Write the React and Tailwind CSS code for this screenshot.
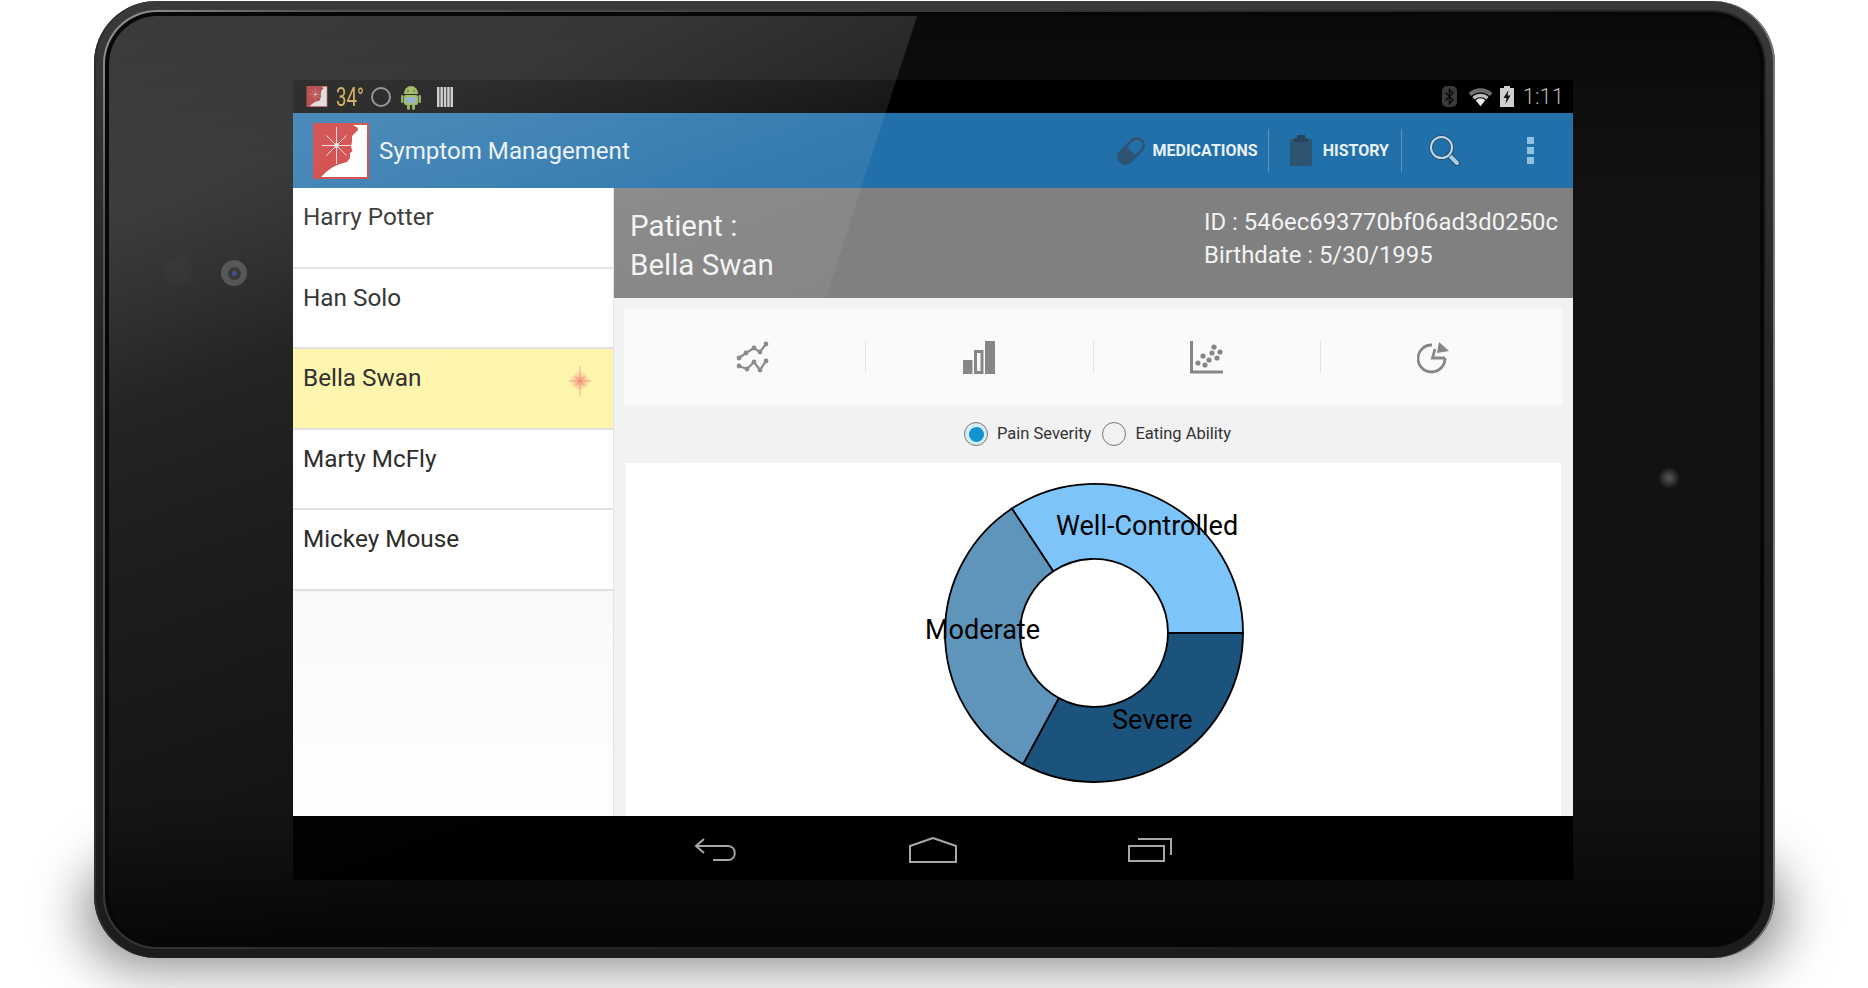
import React from "react";

const patients = ["Harry Potter", "Han Solo", "Bella Swan", "Marty McFly", "Mickey Mouse"];

const LogoIcon = ({ className, face = "#ffffff", red = "#cc3333" }) => (
  <svg viewBox="0 0 56 56" className={className}>
    <rect width="56" height="56" fill={red} />
    <path
      d="M40 2 L45 5 L45 7 L42 10 L39 13 L39 18 L38 24 L39.5 28 L37 30 L37 35 L34 39 L27 41 L20 44 L13 49 L8 54 L54 54 L54 2 Z"
      fill={face}
    />
    <g stroke={face} strokeWidth="0.8">
      <path d="M23.5 4 V41 M9 22.5 H38 M13.5 12.5 L33.5 32.5 M33.5 12.5 L13.5 32.5" />
    </g>
    <circle cx="23.5" cy="22.5" r="2.2" fill={face} />
  </svg>
);

const AndroidIcon = () => (
  <svg viewBox="0 0 20 26" className="w-5 h-[26px] ml-[10px]">
    <path d="M3 10 a7 8 0 0 1 14 0 Z" fill="#8db04a" />
    <rect x="3" y="11" width="14" height="10" rx="2" fill="#8db04a" />
    <rect x="0" y="11" width="2.5" height="8" rx="1.2" fill="#7ea03f" />
    <rect x="17.5" y="11" width="2.5" height="8" rx="1.2" fill="#7ea03f" />
    <rect x="6" y="20" width="3" height="6" rx="1.4" fill="#7ea03f" />
    <rect x="11" y="20" width="3" height="6" rx="1.4" fill="#7ea03f" />
    <path d="M4 13 L8 14 H12 L16 13 V15 L13 16.5 L16 19 H12 L10 17.5 L8 19 H4 L7 16.5 L4 15 Z" fill="#7f9fdc" />
    <circle cx="7" cy="7" r="0.9" fill="#40521c" />
    <circle cx="13" cy="7" r="0.9" fill="#40521c" />
  </svg>
);

const BarcodeIcon = () => (
  <svg viewBox="0 0 16 20" className="w-4 h-5 ml-4">
    <path d="M0 0 H2.5 V20 H0 Z M3.4 0 H5.9 V20 H3.4 Z M6.8 0 H9.3 V20 H6.8 Z M10.2 0 H12.7 V20 H10.2 Z M13.5 0 H16 V20 H13.5 Z" fill="#c4c4c4" />
  </svg>
);

const BluetoothIcon = () => (
  <svg viewBox="0 0 15 21" className="w-[15px] h-[21px]">
    <rect width="15" height="21" rx="5" fill="#3a3a3a" />
    <path d="M3.5 6.5 L11 14 L7.5 17.5 V3.5 L11 7 L3.5 14.5" fill="none" stroke="#0b0b0b" strokeWidth="1.5" />
  </svg>
);

const WifiIcon = () => (
  <svg viewBox="0 0 26 20" className="w-[25px] h-5 ml-[11px]">
    <path d="M0.5 6 A18 18 0 0 1 25.5 6 L22.5 9 A14 14 0 0 0 3.5 9 Z" fill="#6d6d6d" />
    <path d="M4.5 10 A12.5 12.5 0 0 1 21.5 10 L19 12.5 A9 9 0 0 0 7 12.5 Z" fill="#bcbcbc" />
    <path d="M8 13.5 A7 7 0 0 1 18 13.5 L13 19.5 Z" fill="#ececec" />
  </svg>
);

const BatteryIcon = () => (
  <svg viewBox="0 0 14 21" className="w-[14px] h-[21px] ml-[7px]">
    <path d="M4 0 H10 V2 H14 V21 H0 V2 H4 Z" fill="#cfcfcf" />
    <path d="M8.5 4 L3.5 12 H6.5 L5.5 18 L10.5 9.5 H7.5 Z" fill="#111111" />
  </svg>
);

const PillIcon = () => (
  <svg viewBox="0 0 28 28" className="w-7 h-7">
    <g transform="rotate(-45 14 14)">
      <rect x="-1" y="7" width="30" height="14" rx="7" fill="none" stroke="#2f5372" strokeWidth="2.6" />
      <path d="M14 7 H6 a7 7 0 0 0 0 14 H14 Z" fill="#2f5372" />
    </g>
  </svg>
);

const ClipboardIcon = () => (
  <svg viewBox="0 0 22 31" className="w-[22px] h-[31px]">
    <rect y="4" width="22" height="27" rx="1" fill="#2f5372" />
    <path d="M7 0 H15 V3 H18 V7 H4 V3 H7 Z" fill="#24445f" />
  </svg>
);

const SearchIcon = () => (
  <svg viewBox="0 0 31 31" className="w-[31px] h-[31px]">
    <path d="M20 20 L28 28" stroke="#2a4f6e" strokeWidth="6.5" strokeLinecap="round" />
    <path d="M20 20 L28 28" stroke="#a9cde6" strokeWidth="4" strokeLinecap="round" />
    <circle cx="12.5" cy="12.5" r="10.5" fill="none" stroke="#2a4f6e" strokeWidth="4" />
    <circle cx="12.5" cy="12.5" r="10.5" fill="none" stroke="#bcd8ea" strokeWidth="2" />
  </svg>
);

const LineChartIcon = () => (
  <svg viewBox="0 0 33 32" className="w-[33px] h-8">
    <g fill="none" stroke="#868686" strokeWidth="2.2">
      <path d="M3 17 L10 12 L18 7 L24 11 L30 3" />
      <path d="M3 25 L11 28 L18 21 L24 29 L30 20" />
    </g>
    <g fill="#868686">
      <circle cx="3" cy="17" r="2.4" />
      <circle cx="10" cy="12" r="2.4" />
      <circle cx="18" cy="7" r="2.4" />
      <circle cx="24" cy="11" r="2.4" />
      <circle cx="30" cy="3" r="2.4" />
      <circle cx="3" cy="25" r="2.4" />
      <circle cx="11" cy="28" r="2.4" />
      <circle cx="18" cy="21" r="2.4" />
      <circle cx="24" cy="29" r="2.4" />
      <circle cx="30" cy="20" r="2.4" />
    </g>
  </svg>
);

const BarChartIcon = () => (
  <svg viewBox="0 0 32 33" className="w-8 h-[33px]">
    <rect x="0" y="19" width="9.5" height="14" fill="#868686" />
    <rect x="12.5" y="10.5" width="6.5" height="21" fill="none" stroke="#868686" strokeWidth="3" />
    <rect x="22" y="0" width="10" height="33" fill="#868686" />
  </svg>
);

const ScatterIcon = () => (
  <svg viewBox="0 0 33 33" className="w-[33px] h-[33px]">
    <path d="M1.5 0 V31 H33" fill="none" stroke="#868686" strokeWidth="3" />
    <g fill="#868686">
      <circle cx="8" cy="22" r="2.6" />
      <circle cx="15" cy="24" r="2.6" />
      <circle cx="13" cy="15" r="2.6" />
      <circle cx="19" cy="19" r="2.6" />
      <circle cx="22" cy="12" r="2.6" />
      <circle cx="24" cy="6" r="2.6" />
      <circle cx="27" cy="17" r="2.6" />
      <circle cx="30" cy="11" r="2.6" />
    </g>
  </svg>
);

const PieIcon = () => (
  <svg viewBox="0 0 33 33" className="w-[33px] h-[33px]">
    <path d="M28 17 A13.5 13.5 0 1 1 15 4 M18 8 L15.5 17 H28" fill="none" stroke="#868686" strokeWidth="2.8" />
    <path d="M22 1 L32 10 L20 12 Z" fill="#868686" />
  </svg>
);

const SparkIcon = () => (
  <svg viewBox="0 0 26 32" className="w-[24px] h-8">
    <defs>
      <radialGradient id="spark">
        <stop offset="0%" stopColor="#f05a5a" stopOpacity="0.6" />
        <stop offset="100%" stopColor="#f05a5a" stopOpacity="0" />
      </radialGradient>
    </defs>
    <circle cx="13" cy="16" r="11" fill="url(#spark)" />
    <path d="M13 0 V32 M1 16 H25 M8 11 L18 21 M18 11 L8 21" stroke="#ee7a7a" strokeWidth="0.7" />
  </svg>
);

const Donut = () => (
  <svg viewBox="0 0 400 353" className="w-[400px] h-[353px] overflow-visible">
    <g stroke="#000000" strokeWidth="1.8">
      <path d="M349 170 A149 149 0 0 0 117.9 45.6 L159.2 108.2 A74 74 0 0 1 274 170 Z" fill="#7dc4fb" />
      <path d="M117.9 45.6 A149 149 0 0 0 129.2 301.1 L164.9 235.1 A74 74 0 0 1 159.2 108.2 Z" fill="#5f94bb" />
      <path d="M129.2 301.1 A149 149 0 0 0 349 170 L274 170 A74 74 0 0 1 164.9 235.1 Z" fill="#1b537d" />
    </g>
    <g fill="#000000" fontSize="27" fontFamily="Roboto, sans-serif">
      <text x="162" y="72">Well-Controlled</text>
      <text x="31" y="176">Moderate</text>
      <text x="218" y="266">Severe</text>
    </g>
  </svg>
);

const ChartTab = ({ children, last }) => (
  <div className={`flex-1 h-8 flex items-center justify-center ${last ? "" : "border-r border-[#e4e4e4]"}`}>
    {children}
  </div>
);

const App = () => {
  return (
    <div className="w-[1868px] h-[988px] bg-white overflow-hidden pt-px pl-[94px] font-['Roboto',sans-serif]">
      <div className="relative w-[1681px] h-[957px]">
        {/* soft shadow under the tablet */}
        <div className="absolute -left-[10px] -right-[10px] -bottom-[10px] h-[110px] bg-black/45 blur-[26px] rounded-[60px]"></div>

        {/* rim */}
        <div className="relative h-full rounded-[62px] p-[9px] bg-[linear-gradient(180deg,#3a3a3a,#222222_40%,#1c1c1c)] shadow-[inset_-2px_0_0_#777777,inset_2px_0_0_#2e2e2e]">
          <div className="h-full rounded-[54px] p-[2px] bg-[linear-gradient(135deg,#9a9a9a,#555555_8%,#262626_50%,#1a1a1a)]">
            <div className="h-full rounded-[52px] p-1 bg-[#070707]">
              <div className="relative h-full rounded-[48px] overflow-hidden pt-[64px] pl-[184px] bg-[linear-gradient(180deg,#0a0a0a,#121212_20%,#111111_85%,#060606)]">
                {/* front camera and sensors */}
                <div className="absolute left-[55px] top-[241px] w-7 h-7 rounded-full bg-[#161616]"></div>
                <div className="absolute left-[112px] top-[244px] w-[26px] h-[26px] rounded-full bg-[#3e3e3e] flex items-center justify-center">
                  <div className="w-[13px] h-[13px] rounded-full bg-[#1c1c1c] flex items-center justify-center">
                    <div className="w-[5px] h-[5px] rounded-full bg-[#2b3680]"></div>
                  </div>
                </div>
                <div className="absolute left-[1548px] top-[450px] w-6 h-6 rounded-full bg-[radial-gradient(circle,#4e4e4e,#4e4e4e_10%,transparent_65%)]"></div>

                {/* screen */}
                <div className="w-[1280px] h-[800px] flex flex-col bg-black">
                  <div className="h-[33px] bg-black flex items-center pl-[13px] pr-[9px]">
                    <LogoIcon className="w-[22px] h-[21px]" face="#d8d8d8" red="#a92b2b" />
                    <span className="ml-2 w-[26px] text-[26px] leading-none text-[#cf9f45] origin-left scale-x-[0.72] whitespace-nowrap">34°</span>
                    <div className="ml-[9px] w-5 h-5 rounded-full border-2 border-[#808080]"></div>
                    <AndroidIcon />
                    <BarcodeIcon />
                    <div className="ml-auto flex items-center">
                      <BluetoothIcon />
                      <WifiIcon />
                      <BatteryIcon />
                      <span className="ml-[9px] text-[22px] leading-none font-light text-[#b4b4b4]">1:11</span>
                    </div>
                  </div>

                  <div className="h-[75px] bg-[#2270a9] flex items-center pl-5">
                    <LogoIcon className="w-14 h-14" />
                    <span className="ml-[10px] mt-[2px] text-[24.1px] text-[#e8f1f8]">Symptom Management</span>
                    <div className="ml-auto flex items-center h-[43px]">
                      <PillIcon />
                      <span className="ml-2 text-[16px] font-bold text-[#e8f1f8]">MEDICATIONS</span>
                      <div className="ml-[10px] w-px h-full bg-white/25"></div>
                      <div className="ml-[21px]"><ClipboardIcon /></div>
                      <span className="ml-[11px] text-[16px] font-bold text-[#e8f1f8]">HISTORY</span>
                      <div className="ml-[12px] w-px h-full bg-white/25"></div>
                      <div className="ml-[27px]"><SearchIcon /></div>
                      <div className="ml-[67px] mr-[39px] flex flex-col gap-[3px]">
                        <div className="w-[7px] h-[7px] bg-[#8fc0df]"></div>
                        <div className="w-[7px] h-[7px] bg-[#8fc0df]"></div>
                        <div className="w-[7px] h-[7px] bg-[#8fc0df]"></div>
                      </div>
                    </div>
                  </div>

                  <div className="flex-1 flex min-h-0 bg-white">
                    {/* patient list */}
                    <div className="w-[321px] border-r border-[#e2e2e2] bg-[linear-gradient(180deg,#f8f8f8,#f8f8f8_58%,#ffffff)]">
                      {patients.map((name) => (
                        <div
                          key={name}
                          className={`h-[80.5px] border-b-2 border-[#e0e0e0] pl-[10px] pt-[13px] pr-[21px] flex justify-between text-[24.3px] leading-[32px] text-[#222222] ${
                            name === "Bella Swan" ? "bg-[#fef5a8]" : "bg-white"
                          }`}
                        >
                          <span>{name}</span>
                          {name === "Bella Swan" && <div className="pt-[3px]"><SparkIcon /></div>}
                        </div>
                      ))}
                    </div>

                    {/* patient detail */}
                    <div className="flex-1 flex flex-col bg-[#f2f2f2]">
                      <div className="h-[110px] bg-[#808080] flex justify-between text-[#f2f2f2] pl-[16px] pr-[15px] pt-[16px]">
                        <div className="mt-[3px] text-[29.5px] leading-[39px]">
                          <div>Patient :</div>
                          <div>Bella Swan</div>
                        </div>
                        <div className="mt-[2px] text-[23.9px] leading-[33px]">
                          <div>ID : 546ec693770bf06ad3d0250c</div>
                          <div>Birthdate : 5/30/1995</div>
                        </div>
                      </div>

                      <div className="mt-[11px] ml-[10px] mr-[11px] h-[96px] bg-[#fafafa] flex items-center px-[15px]">
                        <ChartTab><LineChartIcon /></ChartTab>
                        <ChartTab><BarChartIcon /></ChartTab>
                        <ChartTab><ScatterIcon /></ChartTab>
                        <ChartTab last><PieIcon /></ChartTab>
                      </div>

                      <div className="h-[58px] flex items-center justify-center pl-[8px] text-[16.5px] text-[#333333]">
                        <div className="w-6 h-6 rounded-full border border-[#777777] bg-[#d8ecf6] flex items-center justify-center">
                          <div className="w-[15px] h-[15px] rounded-full bg-[#0f93d2]"></div>
                        </div>
                        <span className="ml-[9px]">Pain Severity</span>
                        <div className="ml-[11px] w-6 h-6 rounded-full border border-[#777777]"></div>
                        <span className="ml-[9px]">Eating Ability</span>
                      </div>

                      <div className="flex-1 min-h-0 ml-[12px] mr-3 bg-white flex justify-center">
                        <Donut />
                      </div>
                    </div>
                  </div>

                  <div className="h-[64px] bg-black flex items-center justify-center gap-[171px] pt-[3px]">
                    <svg viewBox="0 0 44 24" className="w-11 h-6 text-[#a8a8a8]">
                      <path d="M10 1 L2 8 L10 15 M2 8 H34 C43 8 43 22 34 22 H19" fill="none" stroke="currentColor" strokeWidth="2" />
                    </svg>
                    <svg viewBox="0 0 48 26" className="w-12 h-[26px] text-[#a8a8a8]">
                      <path d="M1 9 L24 1 L47 9 V25 H1 Z" fill="none" stroke="currentColor" strokeWidth="2" />
                    </svg>
                    <svg viewBox="0 0 44 24" className="w-11 h-6 text-[#a8a8a8]">
                      <path d="M10 1 H43 V17 M1 8 H36 V23 H1 Z" fill="none" stroke="currentColor" strokeWidth="2" />
                    </svg>
                  </div>
                </div>

                {/* glass reflection */}
                <div className="absolute inset-0 pointer-events-none [clip-path:polygon(0_0,808px_0,509px_924px,0_924px)] bg-[linear-gradient(160deg,rgba(255,255,255,0.2)_0%,rgba(255,255,255,0.18)_13%,rgba(255,255,255,0.13)_20%,rgba(255,255,255,0.08)_26%,rgba(255,255,255,0.05)_36%,rgba(255,255,255,0.02)_52%,rgba(255,255,255,0)_65%)]"></div>
              </div>
            </div>
          </div>
        </div>
      </div>
    </div>
  );
};

export default App;
